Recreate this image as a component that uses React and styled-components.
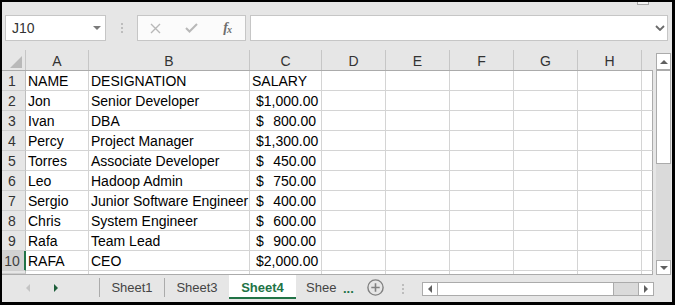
import React from 'react';
import styled, { createGlobalStyle } from 'styled-components';

const FONT = `"Liberation Sans", Arial, sans-serif`;
const GREEN = '#217346';
const COLS = '24px 63px 161px 72px 64px 64px 64px 64px 64px 11px';

const Global = createGlobalStyle`
  html, body { margin: 0; padding: 0; background: #fff; }
  #root { width: 675px; height: 305px; }
  *, *::before, *::after { box-sizing: border-box; }
`;

const Window = styled.div`
  position: relative;
  width: 675px;
  height: 305px;
  background: #e6e6e6;
  border-style: solid;
  border-color: #000;
  border-width: 2px 3px 3px 2px;
  display: flex;
  flex-direction: column;
  font-family: ${FONT};
  overflow: hidden;
`;

const CornerTab = styled.div`
  position: absolute;
  left: 635px;
  top: -2px;
  width: 12px;
  height: 5px;
  background: #f4f4f4;
  border: 1px solid #a8a8a8;
  border-top: none;
`;

const Toolbar = styled.div`
  height: 48px;
  flex: none;
  display: flex;
  align-items: flex-start;
  padding: 13px 0 0 3px;
`;

const NameBox = styled.div`
  width: 101px;
  height: 26px;
  background: #fff;
  border: 1px solid #c6c6c6;
  display: flex;
  align-items: center;
  justify-content: space-between;
  padding: 0 4px 0 6px;
  font-size: 14px;
  color: #333;
`;

const Caret = styled.span`
  width: 0;
  height: 0;
  border-left: 4px solid transparent;
  border-right: 4px solid transparent;
  border-top: 4px solid ${p => p.$color || '#7a7a7a'};
`;

const DotsSlot = styled.div`
  width: ${p => p.$w}px;
  height: ${p => p.$h}px;
  padding-top: ${p => p.$pt || 0}px;
  flex: none;
  display: flex;
  align-items: center;
  justify-content: center;
`;

const VDots = styled.div`
  display: flex;
  flex-direction: column;
  gap: 2px;
  span {
    width: 2px;
    height: 2px;
    background: #bdbdbd;
  }
`;

const FuncBox = styled.div`
  width: 109px;
  height: 26px;
  flex: none;
  background: #fbfbfb;
  border: 1px solid #c6c6c6;
  display: flex;
  align-items: center;
`;

const FuncSlot = styled.div`
  width: 36px;
  height: 100%;
  display: flex;
  align-items: center;
  justify-content: center;
`;

const Fx = styled.span`
  font-family: "Liberation Serif", "Times New Roman", serif;
  font-style: italic;
  font-weight: bold;
  font-size: 14px;
  color: #6e6e6e;
  letter-spacing: -1px;
  sub {
    font-size: 10px;
    vertical-align: -1px;
  }
`;

const FormulaBar = styled.div`
  margin-left: 4px;
  width: 418px;
  height: 26px;
  flex: none;
  background: #fff;
  border: 1px solid #c6c6c6;
  display: flex;
  align-items: center;
  justify-content: flex-end;
  padding-right: 2px;
`;

const SheetArea = styled.div`
  height: 225px;
  flex: none;
  display: flex;
`;

const Grid = styled.div`
  width: 651px;
  flex: none;
  display: flex;
  flex-direction: column;
  border-bottom: 1px solid #ababab;
`;

const Row = styled.div`
  display: grid;
  grid-template-columns: ${COLS};
  height: ${p => p.$h}px;
  flex: none;
  overflow: hidden;
`;

const HeaderRow = styled(Row)`
  border-bottom: 1px solid #ababab;
`;

const ColHead = styled.div`
  position: relative;
  border-right: ${p => (p.$last ? 'none' : '1px solid #c6c6c6')};
  display: flex;
  align-items: center;
  justify-content: center;
  font-size: 14px;
  color: #333;
  padding-top: 1px;
`;

const SelectAll = styled.span`
  position: absolute;
  right: 3px;
  bottom: 2px;
  width: 0;
  height: 0;
  border-left: 12px solid transparent;
  border-bottom: 12px solid #b9b9b9;
`;

const RowHead = styled.div`
  background: ${p => (p.$sel ? '#d2d2d2' : '#e6e6e6')};
  border-right: 1px solid ${p => (p.$sel ? GREEN : '#bdbdbd')};
  box-shadow: ${p => (p.$sel ? `inset -1px 0 0 ${GREEN}` : 'none')};
  border-bottom: 1px solid #cfcfcf;
  display: flex;
  align-items: center;
  justify-content: center;
  padding-right: 3px;
  font-size: 14px;
  color: ${p => (p.$sel ? '#3f3f3f' : '#333')};
`;

const Cell = styled.div`
  background: #fff;
  border-right: 1px solid ${p => (p.$edge ? '#ababab' : '#d4d4d4')};
  border-bottom: ${p => (p.$noBottom ? 'none' : '1px solid #d4d4d4')};
  display: flex;
  align-items: center;
  justify-content: ${p => (p.$acct ? 'space-between' : 'flex-start')};
  padding: ${p => (p.$acct ? '0 5px 0 6px' : '0 2px 0 2px')};
  font-size: 14px;
  color: #000;
  white-space: nowrap;
  overflow: hidden;
`;

const VScroll = styled.div`
  width: 19px;
  flex: none;
  display: flex;
  flex-direction: column;
  padding: 3px 1px 0 3px;
`;

const ScrollBtn = styled.div`
  flex: none;
  height: ${p => p.$h}px;
  background: #fff;
  border: 1px solid #ababab;
  display: flex;
  align-items: center;
  justify-content: center;
`;

const Thumb = styled.div`
  flex: none;
  height: ${p => p.$h}px;
  background: #fff;
  border: 1px solid #ababab;
`;

const Track = styled.div`
  flex: 1;
  background: #dadada;
`;

const Tri = styled.span`
  width: 0;
  height: 0;
  ${p => {
    const c = p.$color || '#606060';
    const s = p.$size || 4;
    switch (p.$dir) {
      case 'up':
        return `border-left:${s}px solid transparent;border-right:${s}px solid transparent;border-bottom:${s}px solid ${c};`;
      case 'down':
        return `border-left:${s}px solid transparent;border-right:${s}px solid transparent;border-top:${s}px solid ${c};`;
      case 'left':
        return `border-top:${s}px solid transparent;border-bottom:${s}px solid transparent;border-right:${s}px solid ${c};`;
      default:
        return `border-top:${s}px solid transparent;border-bottom:${s}px solid transparent;border-left:${s}px solid ${c};`;
    }
  }}
`;

const TabBar = styled.div`
  height: 27px;
  flex: none;
  display: flex;
  align-items: flex-start;
`;

const Nav = styled.div`
  width: 97px;
  height: 24px;
  flex: none;
  display: flex;
  align-items: center;
  padding: 2px 0 0 24px;
  gap: 24px;
`;

const TabSep = styled.div`
  width: 1px;
  height: 19px;
  margin-top: 3px;
  flex: none;
  background: #ababab;
`;

const Tab = styled.div`
  width: ${p => p.$w}px;
  height: 24px;
  flex: none;
  display: flex;
  align-items: center;
  justify-content: ${p => (p.$clip ? 'flex-start' : 'center')};
  padding-top: 2px;
  padding-left: ${p => (p.$clip ? '10px' : '0')};
  white-space: nowrap;
  font-size: 13px;
  color: ${p => (p.$active ? GREEN : '#444')};
  font-weight: ${p => (p.$active ? 'bold' : 'normal')};
  background: ${p => (p.$active ? '#fff' : 'transparent')};
  border-bottom: 2px solid ${p => (p.$active ? GREEN : 'transparent')};
`;

const More = styled.div`
  height: 24px;
  margin-left: 6px;
  flex: none;
  display: flex;
  align-items: center;
  padding-top: 2px;
  font-size: 13px;
  font-weight: bold;
  color: ${GREEN};
`;

const AddSheet = styled.div`
  margin: 4px 0 0 13px;
  width: 17px;
  height: 17px;
  flex: none;
  display: flex;
`;

const HScroll = styled.div`
  margin-top: 7px;
  width: 232px;
  height: 14px;
  flex: none;
  display: flex;
  border: 1px solid #ababab;
  background: #dadada;
`;

const HBtn = styled.div`
  width: 15px;
  flex: none;
  background: #fff;
  border-${p => (p.$side === 'left' ? 'right' : 'left')}: 1px solid #ababab;
  display: flex;
  align-items: center;
  justify-content: center;
`;

const HThumb = styled.div`
  width: 176px;
  flex: none;
  background: #fff;
  border-right: 1px solid #ababab;
`;

const data = [
  ['NAME', 'DESIGNATION', 'SALARY'],
  ['Jon', 'Senior Developer', '1,000.00'],
  ['Ivan', 'DBA', '800.00'],
  ['Percy', 'Project Manager', '1,300.00'],
  ['Torres', 'Associate Developer', '450.00'],
  ['Leo', 'Hadoop Admin', '750.00'],
  ['Sergio', 'Junior Software Engineer', '400.00'],
  ['Chris', 'System Engineer', '600.00'],
  ['Rafa', 'Team Lead', '900.00'],
  ['RAFA', 'CEO', '2,000.00'],
];

const letters = ['A', 'B', 'C', 'D', 'E', 'F', 'G', 'H', ''];

function Dots() {
  return (
    <VDots>
      <span />
      <span />
      <span />
    </VDots>
  );
}

export default function App() {
  return (
    <>
      <Global />
      <Window>
        <CornerTab />
        <Toolbar>
          <NameBox>
            <span>J10</span>
            <Caret />
          </NameBox>
          <DotsSlot $w={31} $h={26}>
            <Dots />
          </DotsSlot>
          <FuncBox>
            <FuncSlot>
              <svg width="11" height="11" viewBox="0 0 11 11">
                <path d="M1 1 L10 10 M10 1 L1 10" stroke="#b8b8b8" strokeWidth="1.4" fill="none" />
              </svg>
            </FuncSlot>
            <FuncSlot>
              <svg width="13" height="10" viewBox="0 0 13 10">
                <path d="M1 5 L4.5 8.5 L12 1" stroke="#b8b8b8" strokeWidth="2" fill="none" />
              </svg>
            </FuncSlot>
            <FuncSlot>
              <Fx>
                f<sub>x</sub>
              </Fx>
            </FuncSlot>
          </FuncBox>
          <FormulaBar>
            <svg width="10" height="6" viewBox="0 0 10 6">
              <path d="M1 1 L5 5 L9 1" stroke="#6a6a6a" strokeWidth="1.8" fill="none" />
            </svg>
          </FormulaBar>
        </Toolbar>

        <SheetArea>
          <Grid>
            <HeaderRow $h={21}>
              <ColHead>
                <SelectAll />
              </ColHead>
              {letters.map((l, i) => (
                <ColHead key={i} $last={i === letters.length - 1}>
                  {l}
                </ColHead>
              ))}
            </HeaderRow>
            {data.map((r, i) => (
              <Row key={i} $h={20}>
                <RowHead $sel={i === 9}>{i + 1}</RowHead>
                <Cell>{r[0]}</Cell>
                <Cell>{r[1]}</Cell>
                {i === 0 ? (
                  <Cell>{r[2]}</Cell>
                ) : (
                  <Cell $acct>
                    <span>$</span>
                    <span>{r[2]}</span>
                  </Cell>
                )}
                <Cell />
                <Cell />
                <Cell />
                <Cell />
                <Cell />
                <Cell $edge />
              </Row>
            ))}
            <Row $h={3}>
              <RowHead />
              {letters.map((l, i) => (
                <Cell key={i} $noBottom $edge={i === letters.length - 1} />
              ))}
            </Row>
          </Grid>
          <VScroll>
            <ScrollBtn $h={17}>
              <Tri $dir="up" $size={4} />
            </ScrollBtn>
            <Thumb $h={94} />
            <Track />
            <ScrollBtn $h={15}>
              <Tri $dir="down" $size={4} />
            </ScrollBtn>
          </VScroll>
        </SheetArea>

        <TabBar>
          <Nav>
            <Tri $dir="left" $color="#c4c4c4" />
            <Tri $dir="right" $color="#1d5e3a" />
          </Nav>
          <TabSep />
          <Tab $w={64}>Sheet1</Tab>
          <TabSep />
          <Tab $w={64}>Sheet3</Tab>
          <Tab $w={67} $active>
            Sheet4
          </Tab>
          <Tab $w={41} $clip>
            Shee
          </Tab>
          <More>...</More>
          <AddSheet>
            <svg width="17" height="17" viewBox="0 0 17 17">
              <circle cx="8.5" cy="8.5" r="7.6" stroke="#808080" strokeWidth="1.4" fill="none" />
              <path d="M8.5 4.3 V12.7 M4.3 8.5 H12.7" stroke="#808080" strokeWidth="1.6" />
            </svg>
          </AddSheet>
          <DotsSlot $w={38} $h={24} $pt={3}>
            <Dots />
          </DotsSlot>
          <HScroll>
            <HBtn $side="left">
              <Tri $dir="left" $size={4} />
            </HBtn>
            <HThumb />
            <Track />
            <HBtn $side="right">
              <Tri $dir="right" $size={4} />
            </HBtn>
          </HScroll>
        </TabBar>
      </Window>
    </>
  );
}
